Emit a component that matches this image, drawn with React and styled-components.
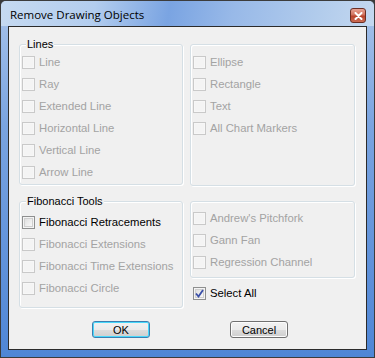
import styled, { createGlobalStyle } from "styled-components";

const GlobalStyle = createGlobalStyle`
  html, body {
    margin: 0;
    padding: 0;
    background: #3a3a3a;
  }
  * { box-sizing: border-box; }
`;

const leftTop = ["Line", "Ray", "Extended Line", "Horizontal Line", "Vertical Line", "Arrow Line"];
const rightTop = ["Ellipse", "Rectangle", "Text", "All Chart Markers"];
const fibItems = [
  { label: "Fibonacci Retracements", enabled: true },
  { label: "Fibonacci Extensions" },
  { label: "Fibonacci Time Extensions" },
  { label: "Fibonacci Circle" },
];
const rightBottom = ["Andrew's Pitchfork", "Gann Fan", "Regression Channel"];

const App = () => {
  return (
    <>
      <GlobalStyle />
      <Frame>
        <TitleBar>
          <Title>Remove Drawing Objects</Title>
          <CloseButton>
            <svg width="9" height="8" viewBox="0 0 9 8">
              <path d="M1.5 1 L7.5 7 M7.5 1 L1.5 7" stroke="#fff" strokeWidth="2" strokeLinecap="round" />
            </svg>
          </CloseButton>
        </TitleBar>
        <Client>
          <Groups>
            <GroupBox $height={141} $padTop={6}>
              <Legend>Lines</Legend>
              {leftTop.map((t) => (
                <CheckRow key={t} label={t} />
              ))}
            </GroupBox>
            <GroupBox $height={142} $padTop={6}>
              {rightTop.map((t) => (
                <CheckRow key={t} label={t} />
              ))}
            </GroupBox>
            <GroupBox $height={107} $padTop={9}>
              <Legend>Fibonacci Tools</Legend>
              {fibItems.map((f) => (
                <CheckRow key={f.label} label={f.label} enabled={f.enabled} />
              ))}
            </GroupBox>
            <Column>
              <GroupBox $height={77} $padTop={5}>
                {rightBottom.map((t) => (
                  <CheckRow key={t} label={t} />
                ))}
              </GroupBox>
              <SelectRow>
                <CheckRow label="Select All" enabled checked />
              </SelectRow>
            </Column>
          </Groups>
          <Buttons>
            <PushButton $default>OK</PushButton>
            <PushButton>Cancel</PushButton>
          </Buttons>
        </Client>
      </Frame>
    </>
  );
};

const CheckRow = ({ label, enabled, checked }) => (
  <Row>
    <Box $enabled={enabled}>
      {checked && (
        <svg width="9" height="9" viewBox="0 0 9 9">
          <path d="M1 4.5 L3.5 7.5 L8 1" fill="none" stroke="#3a4fa8" strokeWidth="1.8" />
        </svg>
      )}
    </Box>
    <Label $enabled={enabled}>{label}</Label>
  </Row>
);

export default App;

const Frame = styled.div`
  width: 375px;
  height: 358px;
  border: 1px solid #3c3c3c;
  border-radius: 6px 6px 0 0;
  padding: 0 7px 7px;
  background: linear-gradient(to bottom, #a9c4ea 0%, #7aa4e0 35%, #4f86d6 100%);
  display: flex;
  flex-direction: column;
`;

const TitleBar = styled.div`
  height: 25px;
  display: flex;
  align-items: center;
  justify-content: space-between;
  margin: 0 -7px;
  padding: 0 8px 0 9px;
  border-radius: 5px 5px 0 0;
  background: linear-gradient(100deg, #c6daf1 0%, #b3cdee 25%, #7aa4e2 45%, #98b9e8 62%, #b2ccec 85%, #c4d8f0 100%);
`;

const Title = styled.span`
  font-family: "Open Sans", "Noto Sans", sans-serif;
  font-size: 11.5px;
  color: #000;
  padding-top: 1px;
`;

const CloseButton = styled.div`
  width: 16px;
  height: 15px;
  margin-top: 4px;
  border: 1px solid #6b2e24;
  border-radius: 3px;
  background: linear-gradient(to bottom, #e8a394 0%, #d0725e 45%, #b8432c 55%, #cc6d55 100%);
  display: flex;
  align-items: center;
  justify-content: center;
`;

const Client = styled.div`
  flex: 1;
  border: 1px solid #2b2b2b;
  background: #f0f0f0;
  padding: 17px 0 0 10px;
  display: flex;
  flex-direction: column;
`;

const Groups = styled.div`
  display: grid;
  grid-template-columns: 164px 165px;
  column-gap: 7px;
  row-gap: 15px;
  align-items: start;
`;

const Column = styled.div`
  display: flex;
  flex-direction: column;
`;

const GroupBox = styled.div`
  position: relative;
  height: ${(p) => p.$height}px;
  border: 1px solid #d5dfe5;
  border-radius: 3px;
  box-shadow: inset 1px 1px 0 #fff, 1px 1px 0 #fff;
  padding: ${(p) => p.$padTop}px 0 0 2px;
  display: flex;
  flex-direction: column;
`;

const Legend = styled.span`
  position: absolute;
  left: 6px;
  top: -8px;
  padding: 0 1px;
  background: #f0f0f0;
  font-family: "Liberation Sans", Arial, sans-serif;
  font-size: 11px;
  line-height: 14px;
  color: #000;
`;

const Row = styled.div`
  height: 22px;
  display: flex;
  align-items: center;
  gap: 4px;
`;

const SelectRow = styled.div`
  margin-top: 4px;
  padding-left: 3px;
`;

const Box = styled.div`
  width: 13px;
  height: 13px;
  border: 1px solid ${(p) => (p.$enabled ? "#8e8f8f" : "#c9c9c9")};
  background: ${(p) =>
    p.$enabled
      ? "linear-gradient(135deg, #d8d8d8 0%, #f4f4f4 70%, #ffffff 100%)"
      : "#f4f4f4"};
  box-shadow: ${(p) => (p.$enabled ? "inset 0 0 0 1px #f4f4f4, inset 0 0 0 2px #cfcfcf" : "inset 0 0 0 1px #f7f7f7")};
  display: flex;
  align-items: center;
  justify-content: center;
`;

const Label = styled.span`
  font-family: "Liberation Sans", Arial, sans-serif;
  font-size: 11.3px;
  color: ${(p) => (p.$enabled ? "#000" : "#a3a3a3")};
  white-space: nowrap;
`;

const Buttons = styled.div`
  display: flex;
  padding: 13px 0 0 73px;
  gap: 80px;
`;

const PushButton = styled.div`
  width: 58px;
  height: 17px;
  border: 1px solid ${(p) => (p.$default ? "#3c7fb1" : "#707070")};
  border-radius: 3px;
  background: linear-gradient(to bottom, #f2f2f2 0%, #ebebeb 50%, #dddddd 51%, #cfcfcf 100%);
  box-shadow: ${(p) => (p.$default ? "inset 0 0 0 1px #48d8fb" : "inset 0 0 0 1px #fcfcfc")};
  display: flex;
  align-items: center;
  justify-content: center;
  font-family: "Liberation Sans", Arial, sans-serif;
  font-size: 11px;
  color: #000;
`;
